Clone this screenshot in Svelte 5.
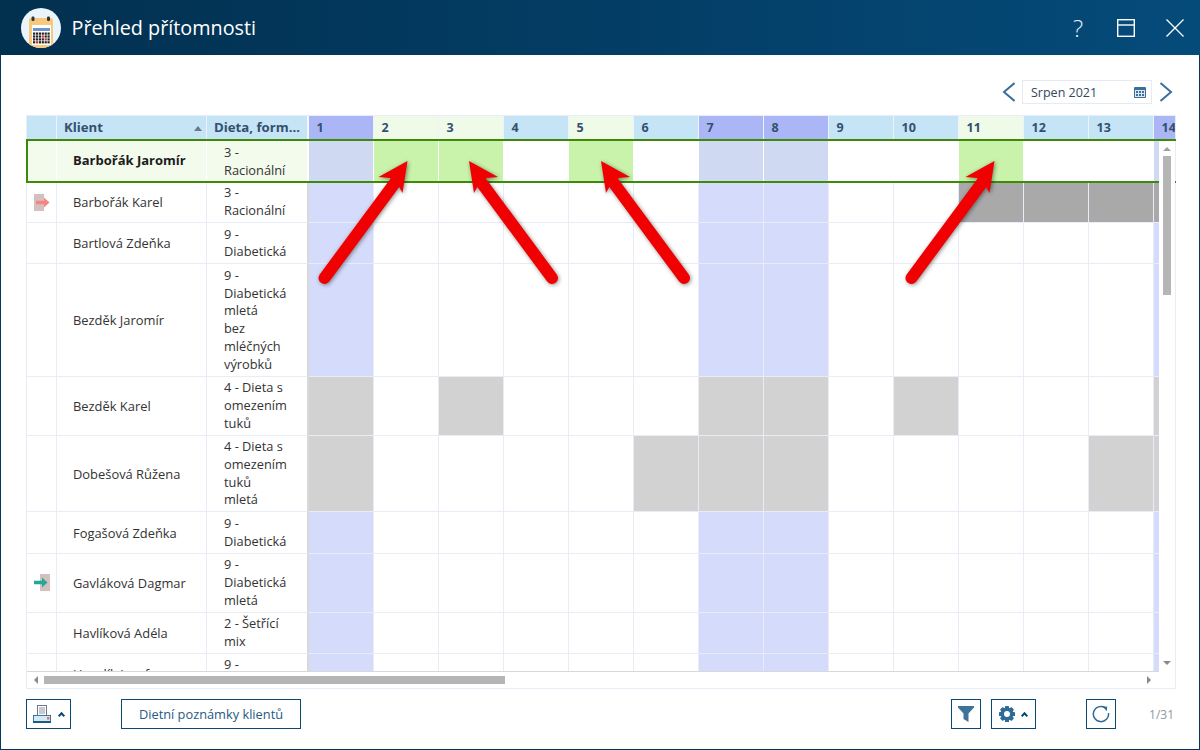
<script>
	const days = Array.from({ length: 14 }, (_, i) => i + 1);
	const weekend = [1, 7, 8, 14];
	const present = [2, 3, 5, 11];

	const clients = [
		{ name: 'Barbořák Jaromír', diet: ['3 -', 'Racionální'], selected: true },
		{ name: 'Barbořák Karel', diet: ['3 -', 'Racionální'], move: 'out', dark: [11, 12, 13, 14] },
		{ name: 'Bartlová Zdeňka', diet: ['9 -', 'Diabetická'] },
		{ name: 'Bezděk Jaromír', diet: ['9 -', 'Diabetická', 'mletá', 'bez', 'mléčných', 'výrobků'] },
		{ name: 'Bezděk Karel', diet: ['4 - Dieta s', 'omezením', 'tuků'], gray: [1, 3, 7, 8, 10, 14] },
		{ name: 'Dobešová Růžena', diet: ['4 - Dieta s', 'omezením', 'tuků', 'mletá'], gray: [1, 6, 7, 8, 13, 14] },
		{ name: 'Fogašová Zdeňka', diet: ['9 -', 'Diabetická'] },
		{ name: 'Gavláková Dagmar', diet: ['9 -', 'Diabetická', 'mletá'], move: 'in' },
		{ name: 'Havlíková Adéla', diet: ['2 - Šetřící', 'mix'] },
		{ name: 'Hanzlík Josef', diet: ['9 -', 'Diabetická'] }
	];

	function cellClass(c, d) {
		if (c.dark?.includes(d)) return 'dark';
		if (c.gray?.includes(d)) return 'gray';
		if (c.selected && present.includes(d)) return 'present';
		if (c.selected && weekend.includes(d)) return 'sel-weekend';
		if (c.selected) return 'sel-plain';
		if (weekend.includes(d)) return 'weekend';
		return '';
	}

	function headClass(d) {
		if (weekend.includes(d)) return 'weekend';
		if (present.includes(d)) return 'present';
		return '';
	}

	// tip position of each annotation arrow, flip = pointing up-left
	const arrows = [
		{ x: 407.5, flip: false },
		{ x: 469, flip: true },
		{ x: 601, flip: true },
		{ x: 994.5, flip: false }
	];

	const calRows = [
		'#222 #222 #222 #222 #222 #222',
		'#222 #222 #222 #b33 #222 #222',
		'#222 #222 #222 #222 #b33 #222',
		'#222 #b33 #222 #222 #222 #222'
	].map((r) => r.split(' '));
</script>

<div class="window">
	<header class="titlebar">
		<svg class="app-icon" width="40" height="40" viewBox="0 0 40 40">
			<defs>
				<clipPath id="disc"><circle cx="20" cy="20" r="20" /></clipPath>
			</defs>
			<circle cx="20" cy="20" r="20" fill="#e9f4fb" />
			<g clip-path="url(#disc)">
				<rect x="8" y="10" width="24" height="32" rx="2" fill="#f8c97c" />
				<rect x="11" y="17" width="19" height="20" fill="#fff" />
				<rect x="12" y="20" width="17" height="3" fill="#6f93cf" />
				{#each calRows as row, r}
					{#each row as col, c}
						<rect x={12 + c * 2.9} y={24.5 + r * 2.9} width="2.2" height="2.2" fill={col} />
					{/each}
				{/each}
				<rect x="10.5" y="8.5" width="3" height="4.5" rx="1.2" fill="#333" />
				<rect x="26" y="8.5" width="3" height="4.5" rx="1.2" fill="#333" />
			</g>
		</svg>
		<h1>Přehled přítomnosti</h1>
		<div class="win-buttons">
			<span class="help">?</span>
			<svg class="win-max" width="18" height="18" viewBox="0 0 18 18" fill="none" stroke="#fff" stroke-width="1.4">
				<rect x="0.7" y="0.7" width="16.6" height="16.6" />
				<path d="M0 6h18" />
			</svg>
			<svg width="18" height="18" viewBox="0 0 18 18" fill="none" stroke="#fff" stroke-width="1.3">
				<path d="M0.5 0.5l17 17M17.5 0.5l-17 17" />
			</svg>
		</div>
	</header>

	<main class="content">
		<div class="month-nav">
			<svg width="14" height="20" viewBox="0 0 14 20" fill="none" stroke="#3b6f9b" stroke-width="2">
				<path d="M13.5 1L3 10l10.5 9" />
			</svg>
			<div class="month-input">
				<span>Srpen 2021</span>
				<svg width="12" height="12" viewBox="0 0 12 12">
					<rect x="0" y="1" width="12" height="11" rx="1" fill="#3b6f9b" />
					<rect x="1" y="4" width="10" height="7" fill="#dce8f2" />
					<path d="M2 5h2v2H2zM5 5h2v2H5zM8 5h2v2H8zM2 8h2v2H2zM5 8h2v2H5zM8 8h2v2H8z" fill="#3b6f9b" />
				</svg>
			</div>
			<svg width="14" height="20" viewBox="0 0 14 20" fill="none" stroke="#3b6f9b" stroke-width="2">
				<path d="M1.5 1L12 10 1.5 19" />
			</svg>
		</div>

		<section class="table-frame">
			<div class="head">
				<div class="hcell"></div>
				<div class="hcell client">Klient<i class="sort"></i></div>
				<div class="hcell diet">Dieta, form...</div>
				{#each days as d}
					<div class="hcell day {headClass(d)}">{d}</div>
				{/each}
			</div>

			<div class="main">
				<div class="rows">
					{#each clients as c}
						<div class="row" class:selected={c.selected}>
							<div class="cell mark">
								{#if c.move === 'out'}
									<svg width="16" height="17" viewBox="0 0 16 17">
										<rect x="0" y="0" width="10" height="17" fill="#d4c0bc" />
										<path d="M2 6.7h8V3.5l5.5 5-5.5 5v-3.2H2z" fill="#f58585" />
									</svg>
								{:else if c.move === 'in'}
									<svg width="16" height="17" viewBox="0 0 16 17">
										<rect x="6" y="0" width="10" height="17" fill="#d4c0bc" />
										<path d="M0 6.7h8V3.5l5.5 5-5.5 5v-3.2H0z" fill="#21a99b" />
									</svg>
								{/if}
							</div>
							<div class="cell name">{c.name}</div>
							<div class="cell diet">
								<div>
									{#each c.diet as line}
										<div>{line}</div>
									{/each}
								</div>
							</div>
							{#each days as d}
								<div class="cell day {cellClass(c, d)}"></div>
							{/each}
						</div>
					{/each}
				</div>
				<div class="vbar">
					<i class="tri up"></i>
					<i class="vthumb"></i>
					<i class="tri down"></i>
				</div>
			</div>

			<div class="hbar">
				<i class="tri left"></i>
				<i class="hthumb"></i>
				<i class="tri right"></i>
			</div>

			<div class="selection"></div>
		</section>

		<footer class="toolbar">
			<button class="btn wide-icon printer" aria-label="Tisk">
				<svg width="18" height="18" viewBox="0 0 18 18">
					<rect x="4.5" y="0.5" width="9" height="10" fill="#fff" stroke="#6a7a8a" />
					<rect x="6" y="2" width="6" height="7" fill="#c9c9d2" />
					<rect x="0" y="10" width="18" height="6" fill="#d2e9f6" />
					<rect x="0" y="16" width="18" height="2" fill="#1c5a85" />
					<rect x="0.4" y="10.4" width="17.2" height="7.2" fill="none" stroke="#1c5a85" stroke-width="0.8" />
					<rect x="14" y="12" width="2.5" height="2.5" fill="#e8707c" />
				</svg>
				<i class="caret"></i>
			</button>
			<button class="btn text">Dietní poznámky klientů</button>
			<span class="spacer"></span>
			<button class="btn square" aria-label="Filtr">
				<svg width="16" height="16" viewBox="0 0 16 16">
					<path d="M0 0h16v1.5L10.5 7.5V16L5.5 13V7.5L0 1.5z" fill="#3f7399" />
				</svg>
			</button>
			<button class="btn wide-icon gear" aria-label="Nastavení">
				<svg width="18" height="18" viewBox="0 0 18 18">
					{#each [0, 45, 90, 135] as a}
						<rect x="7" y="1" width="4" height="16" rx="0.6" fill="#2f6b96" transform="rotate({a} 9 9)" />
					{/each}
					<circle cx="9" cy="9" r="5" fill="none" stroke="#2f6b96" stroke-width="3" />
					<circle cx="9" cy="9" r="3" fill="#fff" />
				</svg>
				<i class="caret"></i>
			</button>
			<button class="btn square refresh" aria-label="Obnovit">
				<svg width="18" height="18" viewBox="0 0 18 18" fill="none" stroke="#2f6b96" stroke-width="1.5">
					<path d="M13 2.6A7.6 7.6 0 1 0 16.5 8" />
					<path d="M10.5 1.2l4.8.5-.6 4.6z" fill="#2f6b96" stroke="none" />
				</svg>
			</button>
			<span class="pages">1/31</span>
		</footer>
	</main>

	<svg class="arrows" width="1200" height="750" viewBox="0 0 1200 750">
		{#each arrows as a}
			<g transform="translate({a.x} 161) scale({a.flip ? -1 : 1} 1)">
				<path d="M-12 21L-83 117" fill="none" stroke="#f00000" stroke-width="12" stroke-linecap="round" />
				<path d="M0 0L-29 16-17.5 17-10 23-5 32z" fill="#f00000" />
			</g>
		{/each}
	</svg>
</div>

<style>
	:global(body) {
		margin: 0;
		background: #fff;
	}

	.window {
		position: relative;
		display: flex;
		flex-direction: column;
		width: 1200px;
		height: 750px;
		font-family: 'Open Sans', sans-serif;
		font-size: 13px;
		color: #222;
		overflow: hidden;
	}

	.titlebar {
		display: flex;
		align-items: center;
		height: 55px;
		flex: none;
		padding: 0 16px 0 21px;
		box-sizing: border-box;
		background: linear-gradient(90deg, #02304f 0%, #033a60 40%, #054b7a 100%);
		color: #fff;
	}

	.app-icon {
		margin-right: 10.5px;
	}

	h1 {
		margin: 0;
		font-size: 19.8px;
		font-weight: 400;
	}

	.win-buttons {
		margin-left: auto;
		display: flex;
		align-items: center;
		gap: 31px;
	}

	.help {
		font-size: 24px;
		font-weight: 300;
		line-height: 30px;
		color: #e6eff6;
	}

	.win-max {
		margin-left: 3px;
	}

	.content {
		flex: 1;
		display: flex;
		flex-direction: column;
		padding: 25px 23px 0 25px;
		border: 1px solid #03385c;
		border-top: 0;
		min-height: 0;
	}

	.month-nav {
		display: flex;
		justify-content: flex-end;
		align-items: center;
		gap: 7px;
		height: 24px;
		padding-right: 3px;
		margin-bottom: 11px;
	}

	.month-input {
		display: flex;
		align-items: center;
		justify-content: space-between;
		box-sizing: border-box;
		width: 130px;
		height: 24px;
		padding: 0 5px 0 8px;
		border: 1px solid #e6eaf5;
		color: #33485c;
		font-size: 12.5px;
	}

	.table-frame {
		position: relative;
		box-sizing: border-box;
		width: 1150px;
		height: 574px;
		border: 1px solid #e8ecf6;
		display: flex;
		flex-direction: column;
	}

	.head {
		display: grid;
		grid-template-columns: 30px 150px 102px repeat(14, 65px);
		height: 23px;
		flex: none;
		overflow: hidden;
	}

	.hcell {
		box-sizing: border-box;
		background: #c5e4f6;
		border-right: 1px solid #edf3fa;
		font-size: 13.2px;
		font-weight: 700;
		color: #34506f;
		line-height: 23px;
		white-space: nowrap;
	}

	.hcell.client {
		position: relative;
		padding-left: 7px;
	}

	.hcell.diet {
		padding-left: 7px;
		border-right: 2px solid #f4f7fb;
	}

	.hcell.day {
		padding-left: 7.5px;
		font-size: 12.5px;
	}

	.hcell.weekend {
		background: #abb6f6;
	}

	.hcell.present {
		background: #effbe8;
	}

	.sort {
		position: absolute;
		right: 4px;
		top: 10px;
		border: 4.5px solid transparent;
		border-top: 0;
		border-bottom: 5px solid #707a86;
	}

	.main {
		display: flex;
		height: 532px;
		flex: none;
	}

	.rows {
		width: 1132px;
		overflow: hidden;
		flex: none;
	}

	.row {
		display: grid;
		grid-template-columns: 30px 150px 102px repeat(14, 65px);
	}

	.cell {
		box-sizing: border-box;
		border-right: 1px solid #e8ecf6;
		border-bottom: 1px solid #e8ecf6;
	}

	.mark {
		display: flex;
		align-items: center;
		justify-content: center;
	}

	.name {
		display: flex;
		align-items: center;
		padding-left: 16px;
		font-size: 12.9px;
		color: #333;
	}

	.cell.diet {
		display: flex;
		align-items: center;
		padding: 2.4px 0 2.2px 17px;
		font-size: 12.8px;
		line-height: 17.8px;
		color: #333;
		border-right: 2px solid #d8d8d8;
	}

	.selected .cell {
		background: #f3fbec;
		border-right-color: #fff;
		border-bottom-color: transparent;
	}

	.selected .cell.diet {
		padding-top: 5px;
		padding-bottom: 1.4px;
		border-right-color: #fff;
	}

	.selected .name {
		font-size: 13px;
		font-weight: 700;
		color: #1c1c1c;
	}

	.cell.weekend {
		background: #d5dbfa;
	}

	.cell.gray {
		background: #d2d2d2;
	}

	.cell.dark {
		background: #a9a9a9;
	}

	.selected .cell.present {
		background: #c9f2aa;
	}

	.selected .cell.sel-weekend {
		background: #cfdaf2;
	}

	.selected .cell.sel-plain {
		background: #fff;
	}

	.vbar {
		position: relative;
		z-index: 2;
		flex: none;
		width: 16px;
		margin-top: 2px;
		background: #fff;
		display: flex;
		flex-direction: column;
		align-items: center;
	}

	.vthumb {
		display: block;
		width: 8px;
		height: 139px;
		margin-top: 5px;
		background: #b5b5b5;
	}

	.tri {
		display: block;
		width: 0;
		height: 0;
		border: 4px solid transparent;
	}

	.tri.up {
		margin-top: 6px;
		border-top: 0;
		border-bottom-color: #a0a0a0;
	}

	.tri.down {
		margin-top: auto;
		margin-bottom: 6px;
		border-bottom: 0;
		border-top-color: #8a8a8a;
	}

	.hbar {
		flex: 1;
		display: flex;
		align-items: center;
		box-sizing: border-box;
		width: 1132px;
		border-top: 1px solid #d8d8d8;
		padding-left: 7px;
	}

	.tri.left {
		border-left: 0;
		border-right-color: #8a8a8a;
		margin-right: 6px;
	}

	.tri.right {
		margin-left: auto;
		margin-right: 8px;
		border-right: 0;
		border-left-color: #8a8a8a;
	}

	.hthumb {
		display: block;
		width: 461px;
		height: 8px;
		background: #b5b5b5;
	}

	.selection {
		position: absolute;
		left: -1px;
		right: -1px;
		top: 23px;
		height: 44px;
		box-sizing: border-box;
		border: 2px solid #3c8a08;
		border-right: 0;
		pointer-events: none;
		z-index: 1;
	}

	.toolbar {
		display: flex;
		align-items: center;
		width: 1150px;
		height: 30px;
		margin-top: 10px;
		position: relative;
	}

	.btn {
		box-sizing: border-box;
		height: 30px;
		padding: 0;
		background: #fff;
		border: 1px solid #0a4a72;
		display: flex;
		align-items: center;
		justify-content: center;
		font-family: inherit;
		font-size: 12.8px;
		color: #1f5a85;
	}

	.btn.wide-icon {
		width: 45px;
		gap: 6px;
	}

	.btn.printer {
		gap: 7.5px;
		padding-right: 0.5px;
	}

	.btn.text {
		width: 180px;
		margin-left: 50px;
	}

	.btn.square {
		width: 30px;
	}

	.btn.gear {
		margin-left: 10px;
		padding-right: 2px;
	}

	.btn.refresh {
		margin-left: 50px;
	}

	.caret {
		display: block;
		width: 5px;
		height: 5px;
		margin-top: 3px;
		border-left: 2px solid #0a4a72;
		border-top: 2px solid #0a4a72;
		box-sizing: border-box;
		transform: rotate(45deg);
	}

	.spacer {
		flex: 1;
	}

	.pages {
		width: 60px;
		text-align: right;
		padding-right: 2px;
		box-sizing: border-box;
		font-size: 12px;
		color: #8d99a3;
	}

	.arrows {
		position: absolute;
		left: 0;
		top: 0;
		z-index: 5;
		pointer-events: none;
		filter: drop-shadow(1px 1px 2px rgba(0, 0, 0, 0.45));
	}
</style>
